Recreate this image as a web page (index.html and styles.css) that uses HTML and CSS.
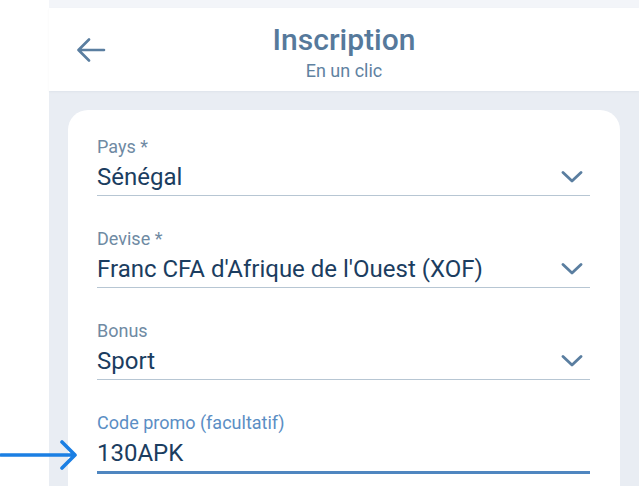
FILE: index.html
```html
<!DOCTYPE html>
<html lang="fr">
<head>
<meta charset="utf-8">
<title>Inscription</title>
<link rel="stylesheet" href="styles.css">
</head>
<body>
<div class="screen">
  <div class="gutter"></div>
  <div class="app">
    <div class="statusbar"></div>
    <header class="header">
      <div class="header-left">
        <svg class="back" width="30" height="24" viewBox="0 0 30 24" aria-hidden="true">
          <path d="M28 12H3M13 1.5L2.5 12L13 22.5" fill="none" stroke="#5a7ea0" stroke-width="2.6" stroke-linecap="round" stroke-linejoin="round"/>
        </svg>
      </div>
      <div class="header-title">
        <h1 class="title">Inscription</h1>
        <div class="subtitle">En un clic</div>
      </div>
      <div></div>
    </header>
    <main class="content">
      <section class="card">
        <div class="field">
          <div class="label">Pays *</div>
          <div class="value-row">
            <span class="value">Sénégal</span>
            <svg class="chevron" width="22" height="12" viewBox="0 0 22 12" aria-hidden="true"><path d="M2 1.5L11 10L20 1.5" fill="none" stroke="#5a7ea0" stroke-width="2.8" stroke-linecap="round" stroke-linejoin="round"/></svg>
          </div>
        </div>
        <div class="field">
          <div class="label">Devise *</div>
          <div class="value-row">
            <span class="value">Franc CFA d'Afrique de l'Ouest (XOF)</span>
            <svg class="chevron" width="22" height="12" viewBox="0 0 22 12" aria-hidden="true"><path d="M2 1.5L11 10L20 1.5" fill="none" stroke="#5a7ea0" stroke-width="2.8" stroke-linecap="round" stroke-linejoin="round"/></svg>
          </div>
        </div>
        <div class="field">
          <div class="label">Bonus</div>
          <div class="value-row">
            <span class="value">Sport</span>
            <svg class="chevron" width="22" height="12" viewBox="0 0 22 12" aria-hidden="true"><path d="M2 1.5L11 10L20 1.5" fill="none" stroke="#5a7ea0" stroke-width="2.8" stroke-linecap="round" stroke-linejoin="round"/></svg>
          </div>
        </div>
        <div class="field field-active">
          <div class="label">Code promo (facultatif)</div>
          <div class="value-row">
            <span class="value">130APK</span>
          </div>
        </div>
      </section>
    </main>
  </div>
  <svg class="pointer" width="80" height="32" viewBox="0 0 80 32" aria-hidden="true">
    <path d="M1 16H74M62 3L75 16L62 29" fill="none" stroke="#1b7fe3" stroke-width="3.6" stroke-linecap="round" stroke-linejoin="round"/>
  </svg>
</div>
</body>
</html>
```
FILE: styles.css
```css
html, body {
  margin: 0;
  padding: 0;
  background: #ffffff;
}
body {
  font-family: Roboto, "Noto Sans", "Liberation Sans", sans-serif;
  width: 639px;
  height: 486px;
  overflow: hidden;
}
.screen {
  position: relative;
  display: flex;
  width: 639px;
  height: 486px;
}
.gutter {
  width: 49px;
  flex: none;
  background: #ffffff;
}
.app {
  flex: 1;
  background: #e9edf3;
  display: flex;
  flex-direction: column;
  min-height: 0;
}
.statusbar {
  flex: none;
  height: 8px;
  background: #f3f5f9;
}
.header {
  flex: none;
  height: 83px;
  background: #ffffff;
  display: grid;
  grid-template-columns: 1fr auto 1fr;
  align-items: start;
  box-shadow: 0 1px 2px rgba(60, 80, 110, 0.06);
}
.header-left {
  padding-left: 27px;
  padding-top: 30px;
}
.back {
  display: block;
}
.header-title {
  text-align: center;
  padding-top: 14px;
}
.title {
  margin: 0;
  font-size: 30px;
  line-height: 36px;
  font-weight: 500;
  color: #56799b;
}
.subtitle {
  margin-top: 2px;
  font-size: 18px;
  line-height: 22px;
  color: #5f82a1;
}
.content {
  flex: 1;
  min-height: 0;
  padding: 19px 19px 0 19px;
}
.card {
  background: #ffffff;
  border-radius: 20px 20px 0 0;
  padding: 26px 30px 0 29px;
  height: 100%;
  box-sizing: border-box;
}
.field {
  border-bottom: 1px solid #b7c6d3;
  padding-bottom: 3px;
  margin-bottom: 32px;
}
.label {
  font-size: 18px;
  line-height: 22px;
  color: #6f8aa3;
}
.value-row {
  margin-top: 4px;
  display: flex;
  align-items: center;
  justify-content: space-between;
  height: 30px;
}
.value {
  font-size: 24px;
  line-height: 30px;
  color: #1b3d60;
}
.chevron {
  display: block;
  margin-right: 7px;
}
.field-active {
  border-bottom: 3px solid #4f86c0;
  padding-bottom: 3px;
}
.field-active .label {
  color: #5b8ec4;
}
.pointer {
  position: absolute;
  left: 0;
  top: 439px;
}
```
